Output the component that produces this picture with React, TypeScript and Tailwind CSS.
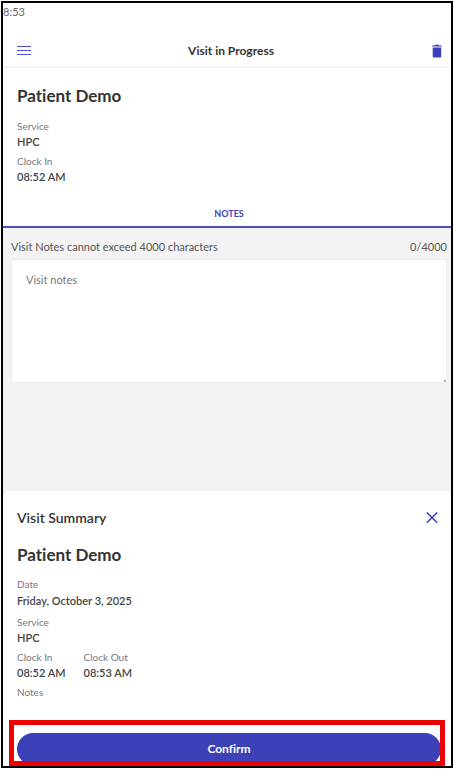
import { useState } from "react";

const MAX_NOTES = 4000;

type FieldProps = {
  label: string;
  value?: string;
  tall?: boolean;
};

function Field({ label, value, tall }: FieldProps) {
  return (
    <div>
      <dt className="text-[10px] leading-[15px] text-[#777777]">{label}</dt>
      {value ? (
        <dd
          className={`text-[11px] font-semibold text-[#444444] ${
            tall ? "leading-[18px]" : "leading-[15px]"
          }`}
        >
          {value}
        </dd>
      ) : null}
    </div>
  );
}

function Header() {
  return (
    <header className="flex h-8 items-center justify-between border-b-2 border-[#f3f3f3] pr-2 pl-3.5">
      <button type="button" aria-label="Menu" className="text-[#4a4ec4]">
        <svg width="14" height="12" viewBox="0 0 14 12" fill="none">
          <path
            d="M0 1.5H14M0 5.5H14M0 9.5H14"
            stroke="currentColor"
            strokeWidth="1.2"
          />
        </svg>
      </button>
      <h1 className="text-[12px] leading-4 font-bold text-[#333333]">
        Visit in Progress
      </h1>
      <button type="button" aria-label="Delete visit" className="text-[#3d41b8]">
        <svg width="12" height="14" viewBox="0 0 12 14" fill="currentColor">
          <path d="M3.6 1.4L4.2.8H7.6L8.2 1.4H10.8V2.6H1.2V1.4Z" />
          <path d="M1.7 3.5H10.2V12.2Q10.2 13.5 8.9 13.5H3Q1.7 13.5 1.7 12.2Z" />
        </svg>
      </button>
    </header>
  );
}

function VisitSummary() {
  return (
    <section className="rounded-t-md bg-white">
      <div className="flex items-center justify-between px-3.5 pt-[18px]">
        <h2 className="text-[14px] leading-[18px] font-semibold text-[#333333]">
          Visit Summary
        </h2>
        <button type="button" aria-label="Close" className="-mr-px text-[#3d41b8]">
          <svg width="12" height="12" viewBox="0 0 12 12" fill="none">
            <path
              d="M.8.4L11.2 10.8M11.2.4L.8 10.8"
              stroke="currentColor"
              strokeWidth="1.5"
            />
          </svg>
        </button>
      </div>
      <div className="px-3.5 pt-4">
        <h3 className="text-[17px] leading-6 font-bold text-[#333333]">
          Patient Demo
        </h3>
        <dl className="mt-2.5 flex flex-col gap-[5px]">
          <Field label="Date" value="Friday, October 3, 2025" tall />
          <Field label="Service" value="HPC" />
          <div className="flex gap-[18px]">
            <Field label="Clock In" value="08:52 AM" />
            <Field label="Clock Out" value="08:53 AM" />
          </div>
          <Field label="Notes" />
        </dl>
      </div>
      <div className="relative mx-1.5 mt-5 pt-[13px] pr-1 pb-px pl-2">
        <button
          type="button"
          className="h-8 w-full rounded-full bg-[#3d41b8] text-[12px] font-bold text-white"
        >
          Confirm
        </button>
        {/* highlight around the confirm action */}
        <div className="pointer-events-none absolute inset-0 border-5 border-[#ee0000]" />
      </div>
    </section>
  );
}

function App() {
  const [notes, setNotes] = useState("");

  return (
    <div className="flex min-h-screen flex-col bg-white p-px font-['Lato',sans-serif] [font-variant-ligatures:none]">
      <div className="flex grow flex-col border-2 border-black">
        <div className="h-[33px] text-[11px] leading-[18px] text-[#666666]">
          8:53
        </div>
        <Header />
        <section className="px-3.5 pt-4 pb-[18px]">
          <h2 className="text-[17px] leading-6 font-bold text-[#333333]">
            Patient Demo
          </h2>
          <dl className="mt-[11px] flex flex-col gap-[5px]">
            <Field label="Service" value="HPC" />
            <Field label="Clock In" value="08:52 AM" />
          </dl>
        </section>
        <button
          type="button"
          className="border-b-2 border-[#4a4ec4] py-1 pl-1 text-[9px] leading-4 font-bold text-[#3d41b8]"
        >
          NOTES
        </button>
        <main className="flex grow flex-col bg-[#f3f3f3]">
          <div className="grow pt-[11px] pr-1 pl-2">
            <div className="flex justify-between text-[11px] leading-4 text-[#555555]">
              <label htmlFor="notes">
                Visit Notes cannot exceed {MAX_NOTES} characters
              </label>
              <span>
                {notes.length}/{MAX_NOTES}
              </span>
            </div>
            <div className="relative mt-1">
              <textarea
                id="notes"
                placeholder="Visit notes"
                maxLength={MAX_NOTES}
                value={notes}
                onChange={(e) => setNotes(e.target.value)}
                className="block h-[124px] w-full resize-none rounded-sm border border-[#ececec] bg-white px-3.5 py-3 text-[11px] leading-4 text-[#444444] placeholder:text-[#777777]"
              />
              <span className="absolute right-px bottom-px size-0.5 bg-[#aaaaaa]" />
            </div>
          </div>
          <VisitSummary />
        </main>
      </div>
    </div>
  );
}

export default App;
